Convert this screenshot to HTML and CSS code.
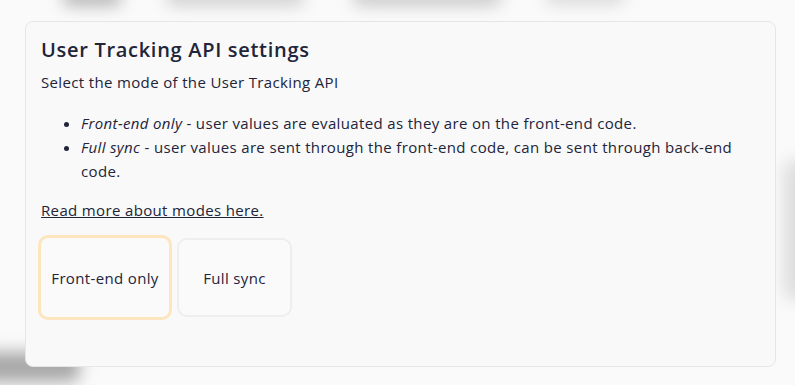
FILE: index.html
```html
<!DOCTYPE html>
<html lang="en">
<head>
    <meta charset="UTF-8">
    <meta name="viewport" content="width=device-width, initial-scale=1.0">
    <title>User Tracking API settings</title>
    <link rel="stylesheet" href="styles.css">
</head>
<body>
    <div class="backdrop">
        <span class="blob blob-1"></span>
        <span class="blob blob-2"></span>
        <span class="blob blob-3"></span>
        <span class="blob blob-4"></span>
        <span class="blob blob-5"></span>
        <span class="blob blob-6"></span>
    </div>

    <div class="card">
        <h2>User Tracking API settings</h2>
        <p class="intro">Select the mode of the User Tracking API</p>
        <ul class="modes">
            <li><em>Front-end only</em> - user values are evaluated as they are on the front-end code.</li>
            <li><em>Full sync</em> - user values are sent through the front-end code, can be sent through back-end code.</li>
        </ul>
        <p class="more"><a href="#">Read more about modes here.</a></p>
        <div class="mode-options">
            <button type="button" class="mode-btn selected">Front-end only</button>
            <button type="button" class="mode-btn">Full sync</button>
        </div>
    </div>
</body>
</html>
```

FILE: styles.css
```css
body {
    font-family: "Open Sans", Lato, sans-serif;
    background-color: #fafafa;
    color: #22243a;
    margin: 0;
    padding: 21px 19px 0 25px;
    height: 385px;
    box-sizing: border-box;
    overflow: hidden;
    position: relative;
}

/* blurred page behind the modal */
.backdrop {
    position: absolute;
    inset: 0;
    overflow: hidden;
}

.blob {
    position: absolute;
    background-color: #b5b5b5;
    border-radius: 10px;
    filter: blur(8px);
}

.blob-1 { left: 62px; top: -12px; width: 60px; height: 18px; }
.blob-2 { left: 165px; top: -12px; width: 140px; height: 18px; opacity: 0.6; }
.blob-3 { left: 352px; top: -12px; width: 150px; height: 18px; opacity: 0.7; }
.blob-4 { left: 545px; top: -12px; width: 80px; height: 16px; opacity: 0.5; }
.blob-5 { left: -20px; top: 352px; width: 100px; height: 30px; background-color: #a8a8a8; }
.blob-6 { left: 783px; top: 160px; width: 30px; height: 140px; opacity: 0.4; }

.card {
    position: relative;
    height: 346px;
    padding: 14px 15px;
    background-color: #f9f9f9;
    border: 1px solid #e6e6e6;
    border-radius: 8px;
    box-sizing: border-box;
}

h2 {
    font-size: 20px;
    font-weight: 600;
    line-height: 28px;
    letter-spacing: 0.7px;
    margin: 0;
}

.intro,
.modes,
.more {
    font-size: 15px;
    line-height: 24px;
    letter-spacing: 0.35px;
}

.intro {
    margin: 6px 0 0;
}

.modes {
    margin: 17px 0 0;
    padding-left: 40px;
}

.more {
    margin: 15px 0 0;
}

.more a {
    color: inherit;
}

.mode-options {
    display: flex;
    align-items: center;
    gap: 5px;
    margin-top: 13px;
    margin-left: -3px;
}

.mode-btn {
    font-family: inherit;
    font-size: 15px;
    letter-spacing: 0.35px;
    color: inherit;
    height: 79px;
    width: 115px;
    padding: 0;
    background-color: #fafafa;
    border: 2px solid #eeeeee;
    border-radius: 10px;
    cursor: pointer;
}

.mode-btn.selected {
    height: 85px;
    width: 134px;
    border: 3px solid #fde5bd;
}
```
